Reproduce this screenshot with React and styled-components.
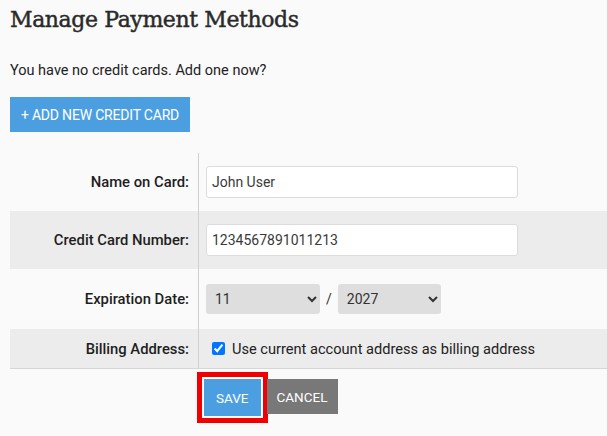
import React from "react";
import styled, { createGlobalStyle } from "styled-components";

const GlobalStyle = createGlobalStyle`
  html, body {
    margin: 0;
    padding: 0;
    background: #fafafa;
  }
  body {
    font-family: Roboto, "Liberation Sans", sans-serif;
    color: #222;
  }
`;

const Page = styled.div`
  padding: 0 0 0 10px;
  width: 597px;
  height: 436px;
  overflow: hidden;
`;

const Title = styled.h1`
  font-family: "DejaVu Serif", "Liberation Serif", serif;
  font-weight: 400;
  font-size: 22px;
  color: #2a2a2a;
  margin: 0;
  padding-top: 5px;
  line-height: 30px;
  letter-spacing: -0.4px;
  -webkit-text-stroke: 0.45px #2a2a2a;
`;

const Intro = styled.p`
  font-size: 14.5px;
  margin: 27px 0 0;
  line-height: 18px;
`;

const Button = styled.button`
  font-family: Roboto, "Liberation Sans", sans-serif;
  font-size: 13.5px;
  font-weight: 400;
  color: #fff;
  border: none;
  border-radius: 0;
  white-space: nowrap;
  background: ${(p) => (p.$variant === "gray" ? "#787878" : "#4b9fe1")};
  height: ${(p) => p.$height || 35}px;
  padding: 0 ${(p) => p.$pad || 13}px;
  cursor: pointer;
`;

const AddButton = styled(Button)`
  margin-top: 17px;
  width: 180px;
  padding: 0;
  font-size: 14px;
  letter-spacing: -0.2px;
`;

const Table = styled.div`
  margin-top: 21px;
  border-bottom: 1px solid #d6d6d6;
`;

const Row = styled.div`
  display: grid;
  grid-template-columns: 188px 1px 1fr;
  height: ${(p) => p.$h}px;
  background: ${(p) => (p.$alt ? "#ececec" : "transparent")};
`;

const Label = styled.div`
  display: flex;
  align-items: center;
  justify-content: flex-end;
  padding-right: 9px;
  font-size: 14.8px;
  font-weight: 500;
  color: #1e1e1e;
`;

const Divider = styled.div`
  background: #d0d0d0;
`;

const Cell = styled.div`
  display: flex;
  align-items: center;
  padding-left: 7px;
  gap: 6px;
`;

const Input = styled.input`
  box-sizing: border-box;
  width: 312px;
  height: 32px;
  border: 1px solid #dcdcdc;
  border-radius: 3px;
  background: #fff;
  padding: 0 5px;
  font-family: Roboto, "Liberation Sans", sans-serif;
  font-size: 14px;
  color: #3a3a3a;
`;

const Select = styled.select`
  box-sizing: border-box;
  width: ${(p) => p.$w}px;
  height: 30px;
  border: none;
  border-radius: 3px;
  background-color: #dedede;
  padding: 0 5px;
  font-family: Roboto, "Liberation Sans", sans-serif;
  font-size: 14px;
  color: #333;
`;

const Slash = styled.span`
  font-size: 14px;
  color: #333;
`;

const CheckLabel = styled.label`
  display: flex;
  align-items: center;
  gap: 7px;
  font-size: 14.6px;
  color: #222;
  padding-left: 6px;
  input {
    margin: 0;
    width: 13px;
    height: 13px;
  }
`;

const Actions = styled.div`
  display: flex;
  align-items: flex-start;
  padding: 10px 0 0 194px;
`;

const SaveButton = styled(Button)`
  box-shadow: 0 0 0 2px #fff, 0 0 0 7px #f00000;
  margin-right: 6px;
  height: 37px;
`;

export default function App() {
  return (
    <Page>
      <GlobalStyle />
      <Title>Manage Payment Methods</Title>
      <Intro>You have no credit cards. Add one now?</Intro>
      <AddButton>+ ADD NEW CREDIT CARD</AddButton>
      <Table>
        <Row $h={58}>
          <Label>Name on Card:</Label>
          <Divider />
          <Cell>
            <Input defaultValue="John User" />
          </Cell>
        </Row>
        <Row $h={58} $alt>
          <Label>Credit Card Number:</Label>
          <Divider />
          <Cell>
            <Input defaultValue="1234567891011213" />
          </Cell>
        </Row>
        <Row $h={60}>
          <Label>Expiration Date:</Label>
          <Divider />
          <Cell>
            <Select $w={114} defaultValue="11">
              {Array.from({ length: 12 }, (_, i) => (
                <option key={i}>{i + 1}</option>
              ))}
            </Select>
            <Slash>/</Slash>
            <Select $w={103} defaultValue="2027">
              {[2025, 2026, 2027, 2028, 2029, 2030].map((y) => (
                <option key={y}>{y}</option>
              ))}
            </Select>
          </Cell>
        </Row>
        <Row $h={39} $alt>
          <Label>Billing Address:</Label>
          <Divider />
          <Cell>
            <CheckLabel>
              <input type="checkbox" defaultChecked />
              Use current account address as billing address
            </CheckLabel>
          </Cell>
        </Row>
      </Table>
      <Actions>
        <SaveButton $pad={12}>SAVE</SaveButton>
        <Button $variant="gray" $pad={10}>CANCEL</Button>
      </Actions>
    </Page>
  );
}
